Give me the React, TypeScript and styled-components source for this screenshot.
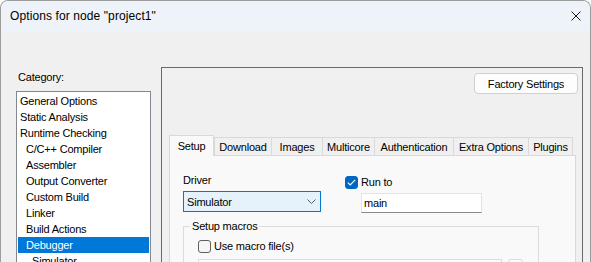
import React from 'react';
import styled, { createGlobalStyle } from 'styled-components';

const Global = createGlobalStyle`
  html, body { margin: 0; padding: 0; background: #ffffff; }
  body {
    font-family: "Liberation Sans", Arial, sans-serif;
    font-size: 11px;
    letter-spacing: -0.2px;
    color: #000;
  }
  * { box-sizing: border-box; }
`;

const Window = styled.div`
  width: 591px;
  height: 262px;
  border: 1px solid #9c9c9c;
  border-bottom: none;
  border-radius: 8px 8px 0 0;
  overflow: hidden;
  display: flex;
  flex-direction: column;
  background: #f0f0f0;
`;

const TitleBar = styled.div`
  height: 30px;
  flex: none;
  background: #eef3f9;
  display: flex;
  align-items: center;
  justify-content: space-between;
  padding: 0 9px;
`;

const Title = styled.span`
  font-size: 12px;
  letter-spacing: 0.1px;
  line-height: 30px;
  color: #000;
`;

const Body = styled.div`
  flex: 1;
  display: flex;
  padding-left: 15px;
  min-height: 0;
`;

const LeftCol = styled.div`
  width: 135px;
  flex: none;
  display: flex;
  flex-direction: column;
  padding-top: 39px;
`;

const CategoryLabel = styled.div`
  line-height: 15px;
  padding-left: 2px;
`;

const List = styled.div`
  margin-top: 6px;
  flex: 1;
  background: #fff;
  border: 1px solid #828790;
  border-bottom: none;
  padding: 1px;
`;

const Item = styled.div<{ $level: number; $selected?: boolean }>`
  height: 16px;
  line-height: 16px;
  padding-left: ${(p) => 2 + p.$level * 6}px;
  white-space: nowrap;
  background: ${(p) => (p.$selected ? '#0078d7' : 'transparent')};
  color: ${(p) => (p.$selected ? '#fff' : '#000')};
`;

const Panel = styled.div`
  margin-left: 10px;
  margin-top: 36px;
  width: 422px;
  flex: none;
  border: 1px solid #6a6a6a;
  border-bottom: none;
  display: flex;
  flex-direction: column;
`;

const ButtonRow = styled.div`
  display: flex;
  justify-content: flex-end;
  padding: 5px 4px 0 0;
`;

const Button = styled.div`
  width: 104px;
  height: 21px;
  border: 1px solid #d0d0d0;
  border-radius: 4px;
  background: #fdfdfd;
  display: flex;
  align-items: center;
  justify-content: center;
`;

const TabStrip = styled.div`
  margin: 41px 0 0 7px;
  height: 20px;
  display: flex;
  align-items: flex-end;
  position: relative;
  z-index: 1;
`;

const Tab = styled.div<{ $w: number; $selected?: boolean; $last?: boolean }>`
  width: ${(p) => p.$w}px;
  height: ${(p) => (p.$selected ? 21 : 18)}px;
  margin-bottom: ${(p) => (p.$selected ? -1 : 0)}px;
  border: 1px solid #d9d9d9;
  border-bottom: none;
  border-right: ${(p) => (p.$last || p.$selected ? '1px solid #d9d9d9' : 'none')};
  background: ${(p) => (p.$selected ? '#f9f9f9' : '#f0f0f0')};
  display: flex;
  align-items: center;
  justify-content: center;
  white-space: nowrap;
  flex: none;
`;

const Page = styled.div`
  margin: 0 6px 0 7px;
  flex: 1;
  background: #f9f9f9;
  border: 1px solid #d9d9d9;
  border-bottom: none;
  padding-left: 13px;
  display: flex;
  flex-direction: column;
`;

const TopRow = styled.div`
  display: flex;
  gap: 24px;
`;

const Column = styled.div<{ $w?: number }>`
  display: flex;
  flex-direction: column;
  ${(p) => (p.$w ? `width: ${p.$w}px;` : '')}
`;

const FieldLabel = styled.div`
  margin-top: 16px;
  line-height: 16px;
`;

const Select = styled.div`
  margin-top: 3px;
  height: 21px;
  background: #e5f1fb;
  border: 1px solid #0078d7;
  display: flex;
  align-items: center;
  justify-content: space-between;
  padding: 0 4px 0 3px;
`;

const CheckRow = styled.label<{ $top: number; $left?: number }>`
  margin-top: ${(p) => p.$top}px;
  margin-left: ${(p) => p.$left ?? 0}px;
  display: flex;
  align-items: center;
  gap: 3px;
  height: 13px;
  line-height: 13px;
`;

const Box = styled.span<{ $checked?: boolean }>`
  width: 13px;
  height: 13px;
  border-radius: 3px;
  flex: none;
  display: flex;
  align-items: center;
  justify-content: center;
  background: ${(p) => (p.$checked ? '#0067c0' : '#f6f6f6')};
  border: 1px solid ${(p) => (p.$checked ? '#0067c0' : '#5f5f5f')};
`;

const TextInput = styled.div<{ $w: number; $top: number; $left?: number }>`
  width: ${(p) => p.$w}px;
  height: 20px;
  margin-top: ${(p) => p.$top}px;
  margin-left: ${(p) => p.$left ?? 0}px;
  background: #fff;
  border: 1px solid #e3e3e3;
  border-bottom-color: #8a8a8a;
  padding-left: 2px;
  line-height: 18px;
  flex: none;
`;

const Group = styled.fieldset`
  margin: 6px 0 0 0;
  width: 356px;
  border: 1px solid #dcdcdc;
  border-bottom: none;
  padding: 0 0 0 6px;
  min-width: 0;
`;

const Legend = styled.legend`
  padding: 0 2px;
  line-height: 15px;
`;

const MacroRow = styled.div`
  display: flex;
  gap: 6px;
  margin: 6px 0 0 8px;
`;

const MacroInput = styled.div`
  width: 304px;
  height: 20px;
  background: #fbfbfb;
  border: 1px solid #dcdcdc;
`;

const SmallButton = styled.div`
  width: 15px;
  height: 20px;
  background: #fbfbfb;
  border: 1px solid #dcdcdc;
  border-radius: 3px;
`;

const CloseIcon = () => (
  <svg width="10" height="10" viewBox="0 0 10 10">
    <path d="M0.5 0.5 L9.5 9.5 M9.5 0.5 L0.5 9.5" stroke="#1a1a1a" strokeWidth="1" fill="none" />
  </svg>
);

const Chevron = () => (
  <svg width="9" height="5" viewBox="0 0 9 5">
    <path d="M0.5 0.5 L4.5 4.5 L8.5 0.5" stroke="#5c5c5c" strokeWidth="1" fill="none" />
  </svg>
);

const Check = () => (
  <svg width="9" height="7" viewBox="0 0 9 7">
    <path d="M0.8 3.6 L3.2 6 L8.2 0.8" stroke="#fff" strokeWidth="1.1" fill="none" />
  </svg>
);

const categories: { label: string; level: number; selected?: boolean }[] = [
  { label: 'General Options', level: 0 },
  { label: 'Static Analysis', level: 0 },
  { label: 'Runtime Checking', level: 0 },
  { label: 'C/C++ Compiler', level: 1 },
  { label: 'Assembler', level: 1 },
  { label: 'Output Converter', level: 1 },
  { label: 'Custom Build', level: 1 },
  { label: 'Linker', level: 1 },
  { label: 'Build Actions', level: 1 },
  { label: 'Debugger', level: 1, selected: true },
  { label: 'Simulator', level: 2 },
];

const tabs: { label: string; w: number; selected?: boolean }[] = [
  { label: 'Setup', w: 45, selected: true },
  { label: 'Download', w: 57 },
  { label: 'Images', w: 51 },
  { label: 'Multicore', w: 52 },
  { label: 'Authentication', w: 79 },
  { label: 'Extra Options', w: 75 },
  { label: 'Plugins', w: 45 },
];

export default function App() {
  return (
    <>
      <Global />
      <Window>
        <TitleBar>
          <Title>Options for node "project1"</Title>
          <CloseIcon />
        </TitleBar>
        <Body>
          <LeftCol>
            <CategoryLabel>Category:</CategoryLabel>
            <List>
              {categories.map((c) => (
                <Item key={c.label} $level={c.level} $selected={c.selected}>
                  {c.label}
                </Item>
              ))}
            </List>
          </LeftCol>
          <Panel>
            <ButtonRow>
              <Button>Factory Settings</Button>
            </ButtonRow>
            <TabStrip>
              {tabs.map((t, i) => (
                <Tab key={t.label} $w={t.w} $selected={t.selected} $last={i === tabs.length - 1}>
                  {t.label}
                </Tab>
              ))}
            </TabStrip>
            <Page>
              <TopRow>
                <Column $w={138}>
                  <FieldLabel>Driver</FieldLabel>
                  <Select>
                    <span>Simulator</span>
                    <Chevron />
                  </Select>
                </Column>
                <Column>
                  <CheckRow $top={20}>
                    <Box $checked>
                      <Check />
                    </Box>
                    Run to
                  </CheckRow>
                  <TextInput $w={121} $top={4} $left={16}>
                    main
                  </TextInput>
                </Column>
              </TopRow>
              <Group>
                <Legend>Setup macros</Legend>
                <CheckRow $top={6} $left={8}>
                  <Box />
                  Use macro file(s)
                </CheckRow>
                <MacroRow>
                  <MacroInput />
                  <SmallButton />
                </MacroRow>
              </Group>
            </Page>
          </Panel>
        </Body>
      </Window>
    </>
  );
}
